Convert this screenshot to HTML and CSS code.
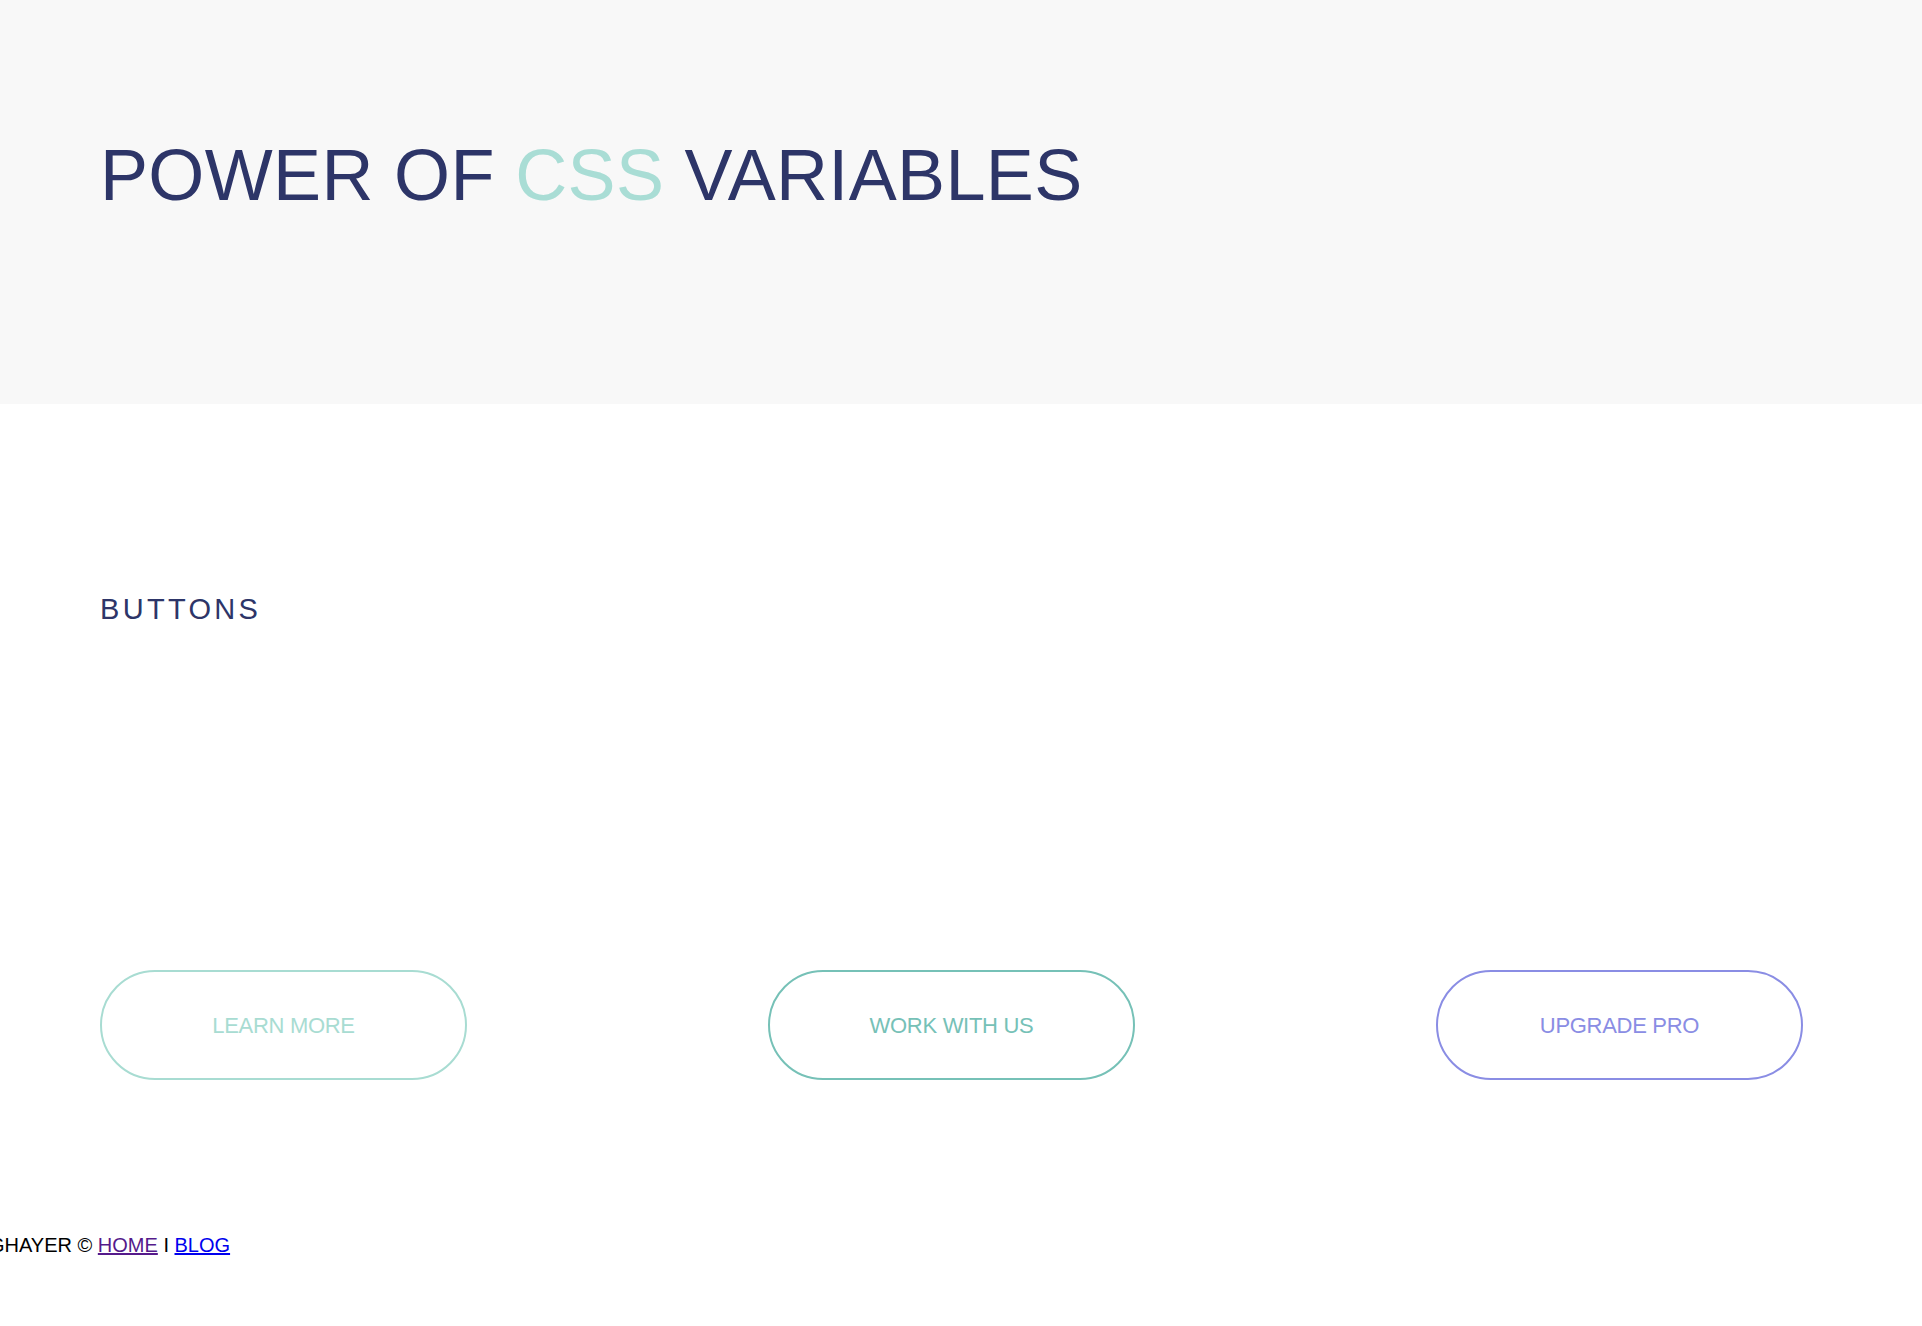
FILE: index.html
```html
<!DOCTYPE html>
<html lang="en">
<head>
<meta charset="utf-8">
<title>Power of CSS Variables</title>
<link rel="stylesheet" href="styles.css">
</head>
<body>
<header class="hero">
  <h1 class="title">POWER OF <span class="accent">CSS</span> VARIABLES</h1>
</header>
<main class="section">
  <h2 class="section-title">BUTTONS</h2>
  <div class="buttons">
    <a class="btn btn-light" href="#learn">LEARN MORE</a>
    <a class="btn btn-teal" href="#work">WORK WITH US</a>
    <a class="btn btn-purple" href="#pro">UPGRADE PRO</a>
  </div>
</main>
<footer class="footer">GHAYER &copy; <a class="link link-visited" href="#home">HOME</a> I <a class="link" href="#blog">BLOG</a></footer>
</body>
</html>
```
FILE: styles.css
```css
html, body {
  margin: 0;
  padding: 0;
}
body {
  font-family: "Liberation Sans", Arial, Helvetica, sans-serif;
  background: #ffffff;
  color: #000;
}
.hero {
  background: #f8f8f8;
  height: 404px;
  box-sizing: border-box;
  padding: 139px 100px 0;
}
.title {
  margin: 0;
  font-size: 72px;
  font-weight: 400;
  line-height: 72px;
  letter-spacing: 0.35px;
  color: #2d3568;
  white-space: nowrap;
}
.accent {
  color: #a9ddd5;
}
.section {
  padding: 191px 100px 0;
}
.section-title {
  margin: 0;
  font-size: 29px;
  font-weight: 400;
  line-height: 29px;
  letter-spacing: 3.3px;
  color: #2d3568;
}
.buttons {
  display: flex;
  gap: 301px;
  margin-top: 346px;
}
.btn {
  box-sizing: border-box;
  width: 367px;
  height: 110px;
  border: 2px solid;
  border-radius: 55px;
  display: flex;
  align-items: center;
  justify-content: center;
  font-size: 22px;
  letter-spacing: -0.3px;
  text-decoration: none;
  padding-top: 2px;
}
.btn-light {
  color: #a8dcd2;
  border-color: #a8dcd2;
}
.btn-teal {
  color: #76c1b7;
  border-color: #76c1b7;
}
.btn-purple {
  color: #8a8de4;
  border-color: #8a8de4;
}
.footer {
  margin: 155px 0 0 -11px;
  font-size: 20px;
  line-height: 20px;
  color: #000;
  white-space: nowrap;
}
.link {
  color: #0000ee;
}
.link-visited {
  color: #551a8b;
}
```
